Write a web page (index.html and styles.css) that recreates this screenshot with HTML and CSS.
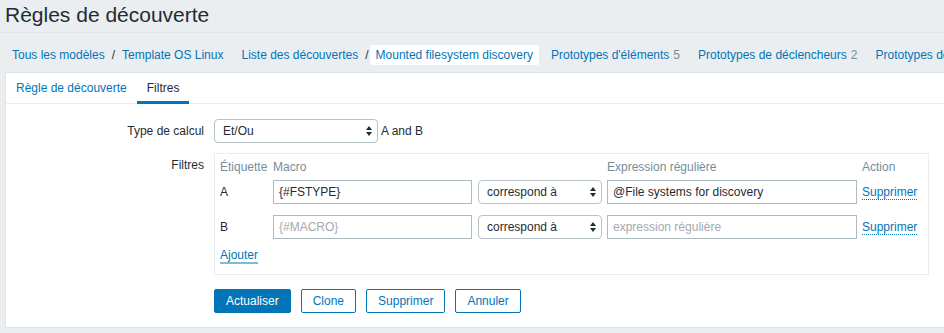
FILE: index.html
```html
<!DOCTYPE html>
<html lang="fr">
<head>
<meta charset="utf-8">
<title>Règles de découverte</title>
<link rel="stylesheet" href="styles.css">
</head>
<body>
<header class="page-header">
  <h1 class="page-title">Règles de découverte</h1>
</header>
<nav class="breadcrumbs">
  <ul class="crumb-group">
    <li class="crumb"><a href="#">Tous les modèles</a></li>
    <li class="crumb-sep">/</li>
    <li class="crumb"><a href="#">Template OS Linux</a></li>
  </ul>
  <ul class="crumb-group">
    <li class="crumb"><a href="#">Liste des découvertes</a></li>
    <li class="crumb-sep">/</li>
    <li class="crumb crumb-selected"><a href="#">Mounted filesystem discovery</a></li>
  </ul>
  <ul class="crumb-group">
    <li class="crumb"><a href="#">Prototypes d'éléments</a><span class="count">5</span></li>
  </ul>
  <ul class="crumb-group">
    <li class="crumb"><a href="#">Prototypes de déclencheurs</a><span class="count">2</span></li>
  </ul>
  <ul class="crumb-group">
    <li class="crumb"><a href="#">Prototypes de graphiques</a></li>
  </ul>
</nav>
<main class="panel">
  <ul class="tabs">
    <li class="tab"><a href="#">Règle de découverte</a></li>
    <li class="tab tab-active">Filtres</li>
  </ul>
  <form class="form">
    <div class="form-row">
      <label class="form-label">Type de calcul</label>
      <div class="form-field field-inline">
        <div class="select select-calc">
          <span>Et/Ou</span>
          <svg class="select-arrows" width="6" height="10" viewBox="0 0 6 10"><path d="M3 0 L6 4 L0 4 Z M0 6 L6 6 L3 10 Z" fill="#1f2c33"/></svg>
        </div>
        <span class="formula">A and B</span>
      </div>
    </div>
    <div class="form-row">
      <label class="form-label">Filtres</label>
      <div class="filter-box">
        <div class="filter-grid">
          <div class="th">Étiquette</div>
          <div class="th">Macro</div>
          <div class="th"></div>
          <div class="th">Expression régulière</div>
          <div class="th">Action</div>

          <div class="td">A</div>
          <div class="td"><input class="input input-macro" type="text" value="{#FSTYPE}" placeholder="{#MACRO}"></div>
          <div class="td">
            <div class="select select-op">
              <span>correspond à</span>
              <svg class="select-arrows" width="6" height="10" viewBox="0 0 6 10"><path d="M3 0 L6 4 L0 4 Z M0 6 L6 6 L3 10 Z" fill="#1f2c33"/></svg>
            </div>
          </div>
          <div class="td"><input class="input input-expr" type="text" value="@File systems for discovery" placeholder="expression régulière"></div>
          <div class="td"><a href="#" class="link-action">Supprimer</a></div>

          <div class="td">B</div>
          <div class="td"><input class="input input-macro" type="text" value="" placeholder="{#MACRO}"></div>
          <div class="td">
            <div class="select select-op">
              <span>correspond à</span>
              <svg class="select-arrows" width="6" height="10" viewBox="0 0 6 10"><path d="M3 0 L6 4 L0 4 Z M0 6 L6 6 L3 10 Z" fill="#1f2c33"/></svg>
            </div>
          </div>
          <div class="td"><input class="input input-expr" type="text" value="" placeholder="expression régulière"></div>
          <div class="td"><a href="#" class="link-action">Supprimer</a></div>
        </div>
        <div class="add-row"><a href="#" class="add-link">Ajouter</a></div>
      </div>
    </div>
    <div class="form-row buttons-row">
      <div class="form-label"></div>
      <div class="buttons">
        <button type="button" class="btn btn-primary">Actualiser</button>
        <button type="button" class="btn">Clone</button>
        <button type="button" class="btn">Supprimer</button>
        <button type="button" class="btn">Annuler</button>
      </div>
    </div>
  </form>
</main>
</body>
</html>
```
FILE: styles.css
```css
* { box-sizing: border-box; }
html, body { margin: 0; padding: 0; }
body {
  width: 944px;
  height: 333px;
  overflow: hidden;
  background: #ebeef0;
  font-family: "Liberation Sans", Arial, sans-serif;
  font-size: 12px;
  color: #1f2c33;
}
a { color: #0275b8; text-decoration: none; }

.page-header {
  height: 33px;
  border-bottom: 1px solid #dfe4e7;
  padding: 3px 0 0 5px;
}
.page-title {
  margin: 0;
  font-size: 21px;
  font-weight: normal;
  line-height: 24px;
  color: #1f2c33;
}

.breadcrumbs {
  display: flex;
  align-items: center;
  height: 39px;
  padding: 4px 0 0 6px;
  gap: 6px;
  white-space: nowrap;
  overflow: hidden;
}
.crumb-group {
  display: flex;
  align-items: center;
  list-style: none;
  margin: 0;
  padding: 0;
  flex-shrink: 0;
}
.crumb { padding: 3px 6px; line-height: 14px; }
.crumb-selected { background: #fff; border-radius: 2px; }
.crumb-sep { padding: 0 1px; line-height: 14px; color: #1f2c33; }
.count { color: #768d99; margin-left: 4px; }

.panel {
  margin-left: 5px;
  background: #fff;
  border: 1px solid #dfe4e7;
  border-right: none;
}
.tabs {
  display: flex;
  list-style: none;
  margin: 0;
  padding: 0;
  border-bottom: 1px solid #ebeef0;
}
.tab {
  padding: 8px 10px 6px;
  line-height: 14px;
  border-bottom: 3px solid transparent;
  margin-bottom: -1px;
}
.tab-active { border-bottom-color: #0275b8; color: #1f2c33; }

.form { padding: 15px 0 14px; }
.form-row {
  display: grid;
  grid-template-columns: 198px 1fr;
  column-gap: 10px;
}
.form-row + .form-row { margin-top: 10px; }
.form-row.buttons-row { margin-top: 14px; }
.form-label {
  text-align: right;
  line-height: 14px;
  padding-top: 5px;
}
.field-inline { display: flex; align-items: center; gap: 3px; }

.select {
  display: flex;
  align-items: center;
  justify-content: space-between;
  height: 24px;
  border: 1px solid #b6c3c9;
  border-radius: 4px;
  padding: 0 5px 0 8px;
  background: #fff;
  color: #1f2c33;
}
.select-calc { width: 164px; }
.select-op { width: 124px; }
.select-arrows { display: block; }

.filter-box {
  width: 715px;
  border: 1px solid #ebeef0;
  padding: 0 5px 10px;
}
.filter-grid {
  display: grid;
  grid-template-columns: 53px 205px 129px 255px auto;
}
.th {
  color: #768d99;
  line-height: 14px;
  padding: 6px 0;
}
.td {
  height: 35px;
  padding-bottom: 11px;
  display: flex;
  align-items: center;
  line-height: 14px;
}
.input {
  height: 24px;
  border: 1px solid #acbbc2;
  border-radius: 0;
  padding: 0 5px;
  font: inherit;
  color: #1f2c33;
  background: #fff;
  outline: none;
}
.input::placeholder { color: #a4aaad; opacity: 1; }
.input-macro { width: 199px; }
.input-expr { width: 250px; }
.link-action { border-bottom: 1px dotted #0275b8; }

.add-row { margin-top: -2px; }
.add-link {
  display: inline-block;
  line-height: 14px;
  border-bottom: 2px solid #80bada;
}

.buttons { display: flex; gap: 10px; }
.btn {
  height: 24px;
  padding: 0 11px;
  border: 1px solid #0275b8;
  border-radius: 2px;
  background: #fff;
  color: #0275b8;
  font: inherit;
  line-height: 22px;
  cursor: pointer;
}
.btn-primary { background: #0275b8; color: #fff; }
```
